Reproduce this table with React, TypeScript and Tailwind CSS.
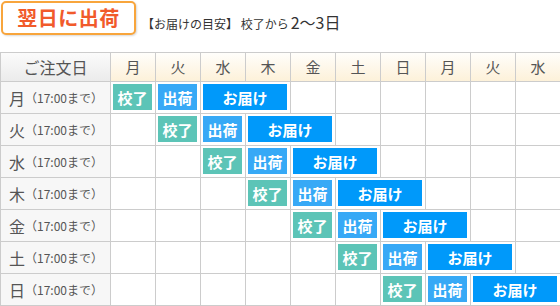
import React from "react";

const DAYS = ["月", "火", "水", "木", "金", "土", "日", "月", "火", "水"];
const ORDER_DAYS = ["月", "火", "水", "木", "金", "土", "日"];

const FONT = { fontFamily: "'Noto Sans CJK JP', 'Noto Sans', sans-serif" };

function Chip({ label, kind }: { label: string; kind: "kou" | "ship" | "deliver" }) {
  const color =
    kind === "kou" ? "bg-[#5cc4b7]" : kind === "ship" ? "bg-[#37a9f6]" : "bg-[#0099fa]";
  return (
    <div className={`flex h-full w-full items-center justify-center text-[15px] font-bold leading-none text-white ${color}`}>
      {label}
    </div>
  );
}

function Row({ index, day }: { index: number; day: string }) {
  const cells: React.ReactNode[] = [];
  let col = 0;
  while (col < 10) {
    if (col === index) {
      cells.push(
        <div key={col} className="bg-white pt-[2px] pl-[2px] pr-[3px] pb-[3px]">
          <Chip label="校了" kind="kou" />
        </div>
      );
      col += 1;
    } else if (col === index + 1) {
      cells.push(
        <div key={col} className="bg-white pt-[2px] pl-[2px] pr-[3px] pb-[3px]">
          <Chip label="出荷" kind="ship" />
        </div>
      );
      col += 1;
    } else if (col === index + 2) {
      cells.push(
        <div key={col} className="col-span-2 bg-white pt-[2px] pl-[2px] pr-[3px] pb-[3px]">
          <Chip label="お届け" kind="deliver" />
        </div>
      );
      col += 2;
    } else {
      cells.push(<div key={col} className="bg-white" />);
      col += 1;
    }
  }
  return (
    <>
      <div className="flex items-center bg-[#f7f7f7] pl-[8px] text-[#555]">
        <span className="text-[16px] leading-none">{day}</span>
        <span className="text-[12px] leading-none">（17:00まで）</span>
      </div>
      {cells}
    </>
  );
}

export default function App() {
  return (
    <div className="h-[306px] w-[560px] overflow-hidden bg-white" style={FONT}>
      {/* Title */}
      <div className="flex h-[52px] items-start">
        <div className="mt-[1px] ml-[1px] flex h-[34px] w-[135px] items-center justify-center rounded-[5px] border-2 border-[#f8a53c] bg-white shadow-[1px_1px_2px_rgba(0,0,0,0.15)]">
          <span className="text-[20px] font-bold tracking-[0.5px] text-[#f15a2b]">翌日に出荷</span>
        </div>
        <div className="mt-[10px] ml-[6px] flex items-baseline text-[#333]">
          <span className="text-[12px]">【お届けの目安】 校了から</span>
          <span className="ml-[2px] text-[16px]">2～3日</span>
        </div>
      </div>

      {/* Table */}
      <div className="grid w-[561px] grid-cols-[109px_repeat(10,44px)] grid-rows-[28px_repeat(7,31px)] gap-px border border-[#ccc] bg-[#ccc]">
        <div className="flex items-center justify-center bg-gradient-to-b from-[#fbfbfb] to-[#ebebeb] text-[16px] text-[#555]">
          ご注文日
        </div>
        {DAYS.map((d, i) => (
          <div
            key={i}
            className="flex items-center justify-center bg-gradient-to-b from-[#fffefb] to-[#fdf1d9] text-[15px] text-[#555]"
          >
            {d}
          </div>
        ))}
        {ORDER_DAYS.map((d, i) => (
          <Row key={i} index={i} day={d} />
        ))}
      </div>
    </div>
  );
}
